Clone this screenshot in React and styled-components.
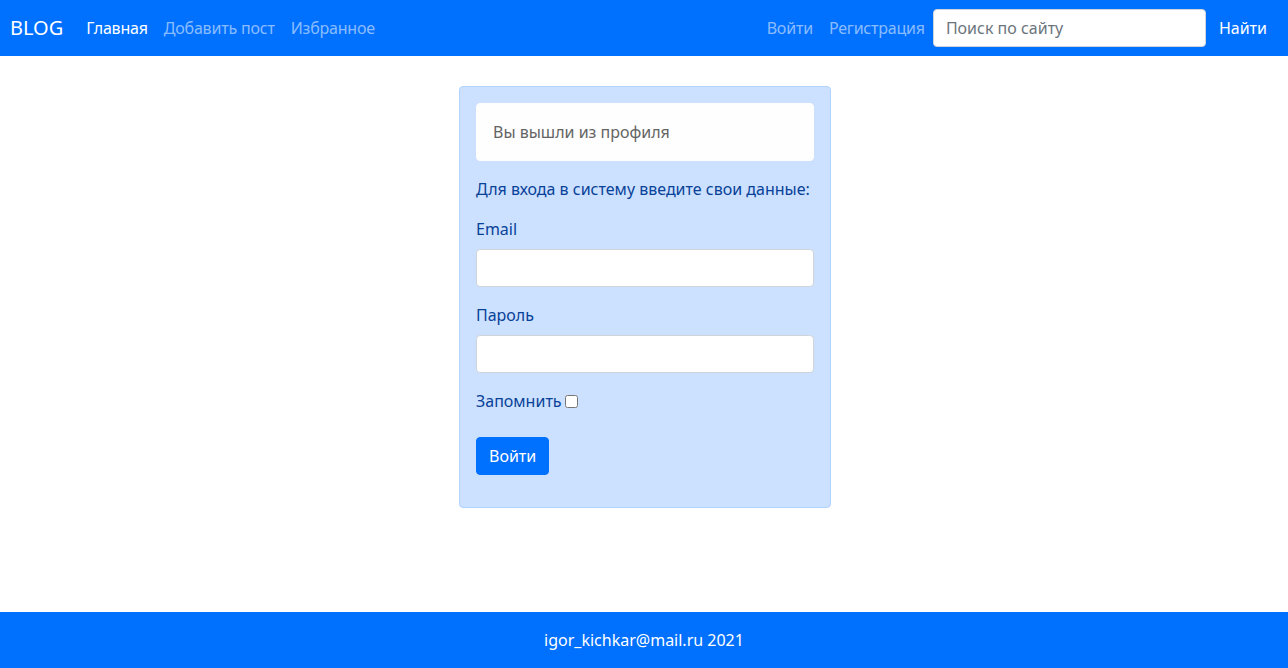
import { createGlobalStyle, styled } from 'styled-components'

const GlobalStyle = createGlobalStyle`
  * { box-sizing: border-box; }
  body {
    margin: 0;
    font-family: "Noto Sans", "Open Sans", sans-serif;
    font-size: 16px;
    line-height: 1.5;
    color: #212529;
    background: #fff;
  }
`

const Page = () => {
  return (
    <Wrapper>
      <GlobalStyle />
      <Navbar>
        <Brand>BLOG</Brand>
        <NavList>
          <NavLink $active>Главная</NavLink>
          <NavLink>Добавить пост</NavLink>
          <NavLink>Избранное</NavLink>
        </NavList>
        <NavRight>
          <NavLink>Войти</NavLink>
          <NavLink>Регистрация</NavLink>
          <SearchForm>
            <SearchInput placeholder="Поиск по сайту" />
            <SearchButton type="button">Найти</SearchButton>
          </SearchForm>
        </NavRight>
      </Navbar>

      <Main>
        <Card>
          <Notice>Вы вышли из профиля</Notice>
          <Lead>Для входа в систему введите свои данные:</Lead>
          <Field>
            <Label>Email</Label>
            <Input type="email" />
          </Field>
          <Field>
            <Label>Пароль</Label>
            <Input type="password" />
          </Field>
          <Remember>
            Запомнить
            <input type="checkbox" />
          </Remember>
          <Submit type="button">Войти</Submit>
        </Card>
      </Main>

      <Footer>igor_kichkar@mail.ru 2021</Footer>
    </Wrapper>
  )
}

const Wrapper = styled.div`
  display: flex;
  flex-direction: column;
  min-height: 100vh;
`

const Navbar = styled.nav`
  display: flex;
  align-items: center;
  height: 56px;
  padding: 0 8px 0 10px;
  background: #0070ff;
`

const Brand = styled.a`
  font-size: 20px;
  line-height: 30px;
  color: #fff;
  margin-right: 15px;
`

const NavList = styled.div`
  display: flex;
  align-items: center;
`

const NavRight = styled.div`
  display: flex;
  align-items: center;
  margin-left: auto;
`

const NavLink = styled.a`
  padding: 8px;
  color: ${(p) => (p.$active ? '#fff' : 'rgba(255, 255, 255, 0.55)')};
  letter-spacing: -0.2px;
  cursor: pointer;
`

const SearchForm = styled.form`
  display: flex;
  align-items: center;
`

const SearchInput = styled.input`
  width: 273px;
  height: 38px;
  padding: 6px 12px;
  font: inherit;
  color: #212529;
  border: 1px solid #ced4da;
  border-radius: 4px;
  outline: none;

  &::placeholder {
    color: #6c757d;
  }
`

const SearchButton = styled.button`
  height: 38px;
  padding: 6px 12px;
  font: inherit;
  color: #fff;
  background: transparent;
  border: 1px solid transparent;
  border-radius: 4px;
`

const Main = styled.main`
  flex: 1;
  display: flex;
  justify-content: center;
  align-items: flex-start;
  padding: 30px 0 0 2px;
`

const Card = styled.div`
  display: flex;
  flex-direction: column;
  align-items: flex-start;
  width: 372px;
  padding: 16px;
  color: #084298;
  background: #cce0ff;
  border: 1px solid #b3d3ff;
  border-radius: 4px;
`

const Notice = styled.div`
  align-self: stretch;
  padding: 16px;
  margin-bottom: 16px;
  color: #636464;
  background: #fefefe;
  border: 1px solid #fdfdfe;
  border-radius: 4px;
`

const Lead = styled.p`
  margin: 0 0 16px;
`

const Field = styled.div`
  align-self: stretch;
  margin-bottom: 16px;
`

const Label = styled.label`
  display: block;
  margin-bottom: 8px;
`

const Input = styled.input`
  display: block;
  width: 100%;
  height: 38px;
  padding: 6px 12px;
  font: inherit;
  border: 1px solid #ced4da;
  border-radius: 4px;
  background: #fff;
  outline: none;
`

const Remember = styled.label`
  display: flex;
  align-items: center;
  margin-bottom: 24px;

  input {
    margin: 0 0 0 3px;
    width: 13px;
    height: 13px;
  }
`

const Submit = styled.button`
  height: 38px;
  padding: 6px 12px;
  margin-bottom: 16px;
  font: inherit;
  color: #fff;
  background: #0070ff;
  border: 1px solid #0070ff;
  border-radius: 4px;
`

const Footer = styled.footer`
  display: flex;
  align-items: center;
  justify-content: center;
  height: 56px;
  color: #fff;
  background: #0070ff;
`

export default Page
